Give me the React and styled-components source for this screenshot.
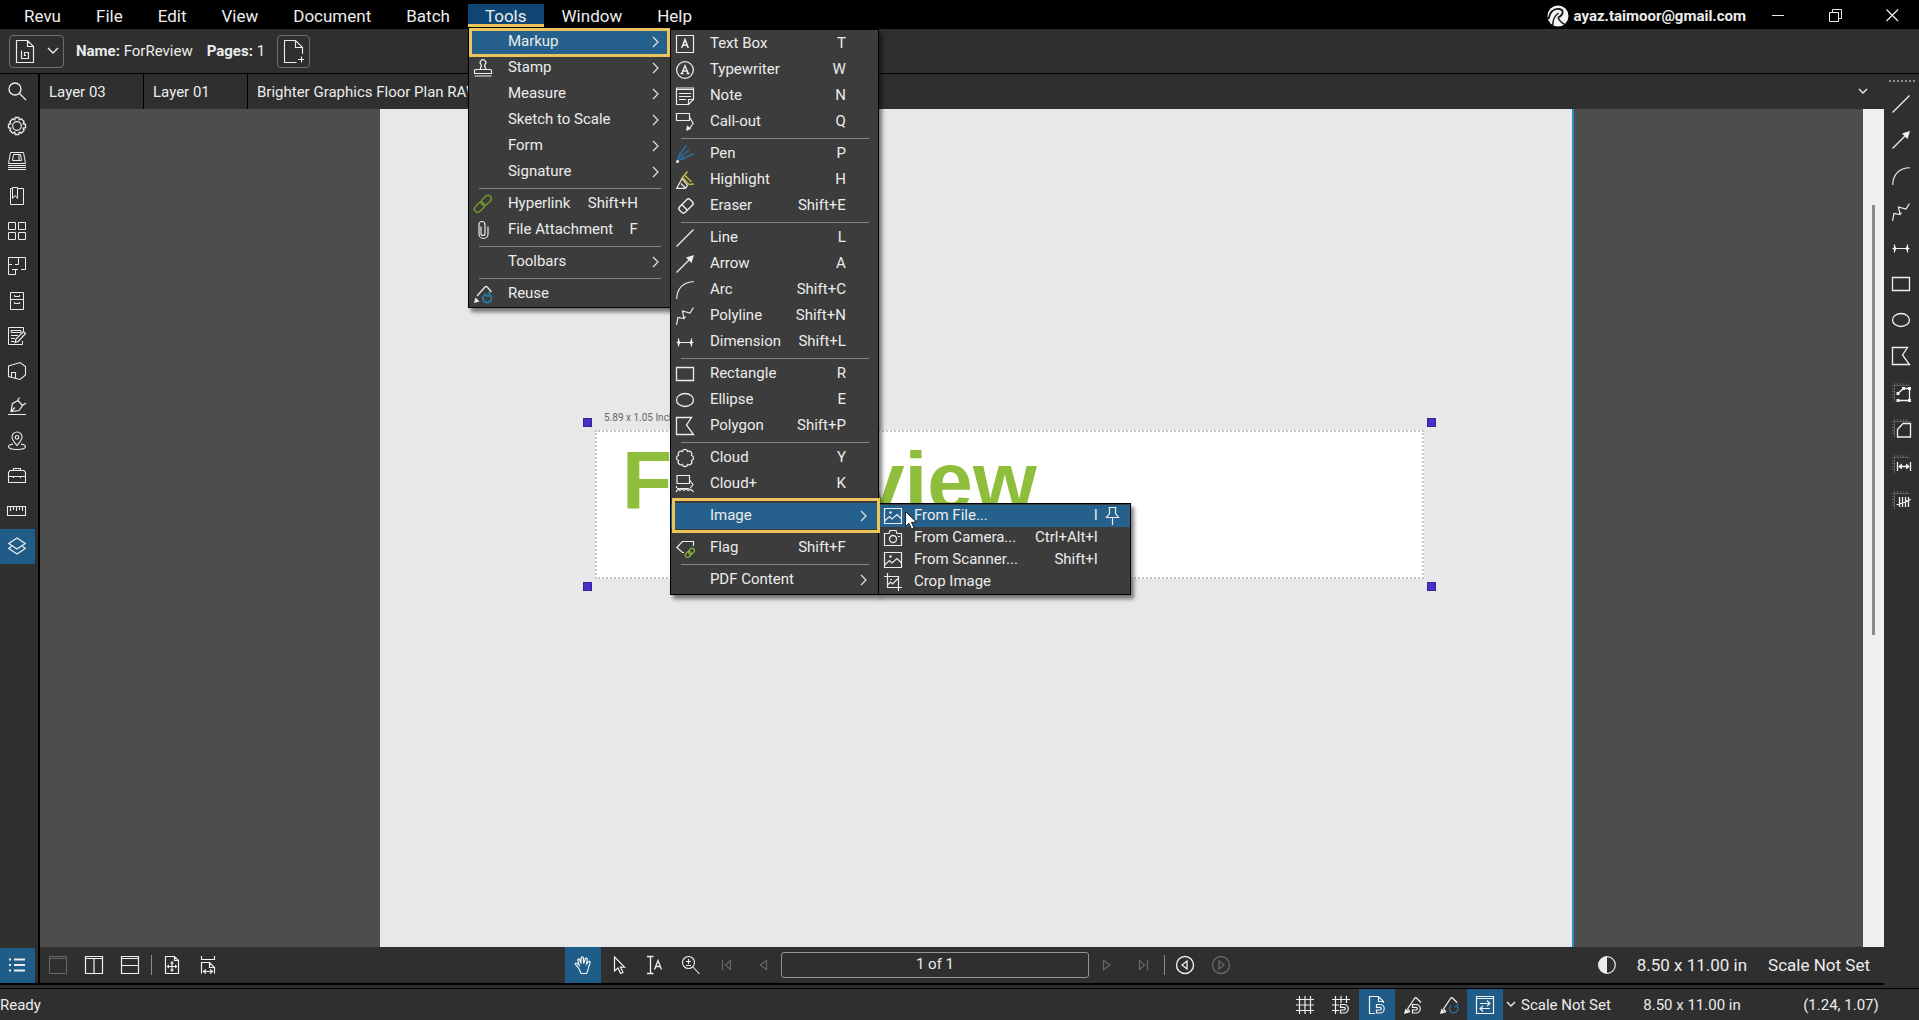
import React from "react";
import styled, { createGlobalStyle, css } from "styled-components";

const color = {
  bar: "#2f2f2f",
  menu: "#3c3c3c",
  canvas: "#4d4d4d",
  page: "#e8e8e8",
  accent: "#1f5c87",
  titleAccent: "#0f4674",
  gold: "#ecc45c",
  text: "#ececec",
  green: "#8fbe3c",
};

const Global = createGlobalStyle`
  *, *::before, *::after { box-sizing: border-box; }
  body { margin: 0; background: ${color.bar}; }
  body, button, input {
    font-family: Roboto, "Liberation Sans", sans-serif;
    font-size: 15px;
    color: ${color.text};
  }
  button { border: 0; padding: 0; background: none; text-align: left; }
  ul { list-style: none; margin: 0; padding: 0; }
  svg { display: block; flex: none; overflow: visible; }
`;

const Shell = styled.div`
  display: flex;
  flex-direction: column;
  height: 100vh;
  overflow: hidden;
`;

/* ---------- title bar ---------- */

const TitleBar = styled.header`
  display: flex;
  flex: none;
  height: 29px;
  background: #000;
`;

const MenuBar = styled.ul`
  display: flex;
  gap: 1px;
  padding: 4px 0 0 7px;
`;

const MenuBarItem = styled.li`
  position: relative;
`;

const MenuBarButton = styled.button`
  height: 25px;
  padding: 0 17px 2px;
  font-size: 17px;
  ${(p) =>
    p.$open &&
    css`
      background: linear-gradient(
        ${color.titleAccent} 20px,
        ${color.gold} 20px 23px,
        #000 23px
      );
    `}
`;

const Account = styled.div`
  display: flex;
  align-items: center;
  gap: 5px;
  margin-left: auto;
  padding: 2px 6px 0 0;
  font-weight: 700;
`;

const WindowControls = styled.div`
  display: flex;
  gap: 4px;
`;

const WindowButton = styled.button`
  display: grid;
  place-items: center;
  width: 53px;
  height: 31px;
`;

/* ---------- drop-down menus ---------- */

const Menu = styled.ul`
  position: absolute;
  z-index: 10;
  top: ${(p) => (p.$root ? "24px" : "0")};
  left: ${(p) => (p.$root ? "0" : "100%")};
  width: ${(p) => p.$width}px;
  padding: ${(p) => (p.$root ? "0" : "1px 0")};
  border: 1px solid #000;
  background: ${color.menu};
  box-shadow: 3px 4px 4px rgba(0, 0, 0, 0.5);
`;

const MenuItem = styled.li`
  position: relative;
`;

const MenuRow = styled.button`
  display: flex;
  align-items: center;
  width: 100%;
  height: ${(p) => (p.$compact ? 22 : 26)}px;
  padding: 0 ${(p) => (p.$compact ? 9 : 11)}px 0 5px;
  background: ${(p) => (p.$active ? "#25618c" : "none")};
`;

const IconSlot = styled.span`
  flex: none;
  width: 18px;
  height: 18px;
  margin-right: ${(p) => (p.$compact ? 12 : 16)}px;
`;

const RowLabel = styled.span`
  flex: 1;
  padding-bottom: 2px;
  white-space: nowrap;
`;

const Shortcut = styled.kbd`
  padding-bottom: 2px;
  font: inherit;
`;

const Trail = styled.span`
  display: flex;
  justify-content: flex-end;
  width: ${(p) => (p.$compact ? 23 : 21)}px;
`;

const Separator = styled.li`
  height: 6px;
  padding: 3px 9px 0 10px;
  &::before {
    content: "";
    display: block;
    height: 1px;
    background: #858585;
  }
`;

const Ring = styled.span`
  position: absolute;
  z-index: 20;
  inset: ${(p) => p.$inset};
  border: 3px solid ${color.gold};
  pointer-events: none;
`;

/* ---------- file bar ---------- */

const FileBar = styled.section`
  display: flex;
  flex: none;
  align-items: center;
  height: 45px;
  padding: 0 9px;
  border-bottom: 1px solid #000;
`;

const OutlineButton = styled.button`
  display: flex;
  align-items: center;
  justify-content: center;
  gap: ${(p) => p.$gap || 0}px;
  width: ${(p) => p.$width}px;
  height: 33px;
  border: 1px solid #6e6e6e;
  border-radius: 4px;
`;

const FileFacts = styled.p`
  display: flex;
  gap: 14px;
  margin: 0 12px;
`;

/* ---------- work area ---------- */

const Work = styled.div`
  display: flex;
  flex: 1;
  min-height: 0;
`;

const Main = styled.div`
  display: flex;
  flex: 1;
  min-width: 0;
  margin-bottom: 3px;
  border-bottom: 2px solid #000;
`;

const LeftBar = styled.nav`
  display: flex;
  flex: none;
  flex-direction: column;
  width: 40px;
  border-right: 2px solid #000;
`;

const PanelButton = styled.button`
  width: 35px;
  height: 35px;
  padding: 8px 9px 9px 8px;
  background: ${(p) => (p.$active ? color.accent : "none")};
  margin-top: ${(p) => (p.$last ? "auto" : 0)};
`;

const Center = styled.div`
  display: flex;
  flex: 1;
  flex-direction: column;
  min-width: 0;
`;

const TabStrip = styled.div`
  display: flex;
  flex: none;
  height: 35px;
`;

const Tab = styled.button`
  min-width: 104px;
  padding: 0 9px;
  border-right: 1px solid #000;
  white-space: nowrap;
`;

const TabMenuButton = styled.button`
  display: grid;
  place-items: center;
  width: 42px;
  margin-left: auto;
`;

const Viewport = styled.main`
  display: grid;
  flex: 1;
  grid-template-columns: 340px 1fr 289px 21px;
  min-height: 0;
  background: ${color.canvas};
`;

const Page = styled.div`
  grid-column: 2;
  padding: 321px 148px 0 215px;
  border-right: 2px solid #2b8fc4;
  background: ${color.page};
`;

const Markup = styled.div`
  position: relative;
  height: 149px;
  padding: 3px 25px;
  border: 2px dotted #c3c3d2;
  background: #fff;
`;

const MarkupText = styled.div`
  color: ${color.green};
  font: 700 82px/92px "Liberation Sans", Arial, sans-serif;
`;

const MarkupSize = styled.span`
  position: absolute;
  top: -20px;
  left: 7px;
  color: #666;
  font-size: 10px;
`;

const Handle = styled.i`
  position: absolute;
  ${(p) => p.$v}: -14px;
  ${(p) => p.$h}: -14px;
  width: 9px;
  height: 9px;
  border: 1px solid #33249a;
  background: #4a2fcb;
`;

const ScrollTrack = styled.div`
  grid-column: 4;
  display: flex;
  justify-content: center;
  padding-top: 96px;
  background: #f0f0f0;
`;

const ScrollThumb = styled.div`
  width: 3px;
  height: 430px;
  background: #8a8a8a;
`;

const RightBar = styled.nav`
  display: flex;
  flex: none;
  flex-direction: column;
  align-items: center;
  width: 35px;
  padding-top: 2px;
`;

const Grip = styled.div`
  flex: none;
  width: 26px;
  height: 6px;
  border-bottom: 2px dotted #8c8c8c;
`;

const RightTools = styled.div`
  padding: 4px 2px 0 0;
`;

const ToolButton = styled.button`
  display: grid;
  flex: none;
  place-items: center;
  width: 36px;
  height: 36px;
  background: ${(p) => (p.$active ? color.accent : "none")};
  color: ${(p) => (p.disabled ? "#686868" : "#f0f0f0")};
`;

/* ---------- page navigation ---------- */

const NavBar = styled.footer`
  display: flex;
  flex: none;
  align-items: center;
  height: 36px;
  padding-right: 14px;
  font-size: 17px;
`;

const NavGroup = styled.div`
  display: flex;
  flex: ${(p) => p.$flex || "none"};
  align-items: center;
`;

const NavRule = styled.i`
  width: 1px;
  height: 20px;
  margin: 0 2px 0 3px;
  background: #8a8a8a;
`;

const PageField = styled.input`
  width: 308px;
  height: 26px;
  padding: 0 0 2px;
  border: 1px solid #949494;
  border-radius: 3px;
  background: transparent;
  text-align: center;
`;

const NavFacts = styled.div`
  display: flex;
  align-items: center;
  gap: 21px;
  margin-left: auto;
  white-space: nowrap;
`;

/* ---------- status bar ---------- */

const StatusBar = styled.footer`
  display: flex;
  flex: none;
  align-items: center;
  height: 32px;
  border-top: 1px solid #000;
`;

const StatusMessage = styled.span`
  flex: 1;
`;

const StatusToggle = styled(ToolButton)`
  height: 31px;
`;

const ScaleButton = styled.button`
  display: flex;
  align-items: center;
  gap: 6px;
  width: 118px;
  padding-left: 4px;
  white-space: nowrap;
`;

const StatusFact = styled.span`
  width: ${(p) => p.$width}px;
  text-align: center;
`;

/* ---------- drawings ---------- */

const dot = { fill: "currentColor", stroke: "none" };
const rulerTicks = (
  <g stroke="#5c5c63">
    <path d="M0 2.5H18M2.5 0V18M5.5 0V2M8.5 0V2M11.5 0V2M14.5 0V2M0 5.5H2M0 8.5H2M0 11.5H2M0 14.5H2" />
  </g>
);
const magnet = (
  <path
    d="M8.5 8.5H12a4 4 0 0 1 0 8.5H8.5V14H12a1.2 1.2 0 0 0 0-2.600H8.500Z"
    strokeWidth="1.2"
  />
);
const pencilArm = <path d="M3.500 13L10.500 2.500Q11.500 1 12.700 2.200L17 6.500M3.500 13L6 16" strokeWidth="1.3" />;
const penTip = <path d="M0 18L1.500 12.500L5.500 16.500Z" {...dot} />;

const drawings = {
  search: <path d="M13 7A6 6 0 1 1 1 7A6 6 0 1 1 13 7ZM11.500 11.500L18 18" strokeWidth="1.3" />,
  gear: (
    <>
      <path d="M7.300 .5H10.700L11.300 2.800L13.300 1.900L16.100 4.700L15.200 6.700L17.500 7.300V10.700L15.200 11.300L16.100 13.300L13.300 16.100L11.300 15.200L10.700 17.500H7.300L6.700 15.200L4.700 16.100L1.900 13.300L2.800 11.300L.5 10.700V7.300L2.800 6.700L1.900 4.700L4.700 1.900L6.700 2.800Z" strokeWidth="1.3" />
      <circle cx="9" cy="9" r="4.300" strokeWidth="1.2" />
    </>
  ),
  sets: <path d="M2.500 .5H15.500L17.500 11.500H.5ZM5.500 2.500H12.500L13.500 8.500H4.500ZM11 2.500V8.500M0 13.500H18M0 15.500H18M0 17.500H18" />,
  bookmark: <path d="M4.500 1.500H2.500V17.500H15.500V1.500H9.500M4.500 .5H9.500V11.500L7 8.500L4.500 11.500Z" />,
  thumbs: <path d="M.5 .5H7.500V7.500H.5ZM10.500 .5H17.500V7.500H10.500ZM.5 10.500H7.500V17.500H.5ZM10.500 10.500H17.500V17.500H10.500Z" />,
  plan: <path d="M4 7.500H.5V.5H17.500V12.500H13M.5 7.500V17.500H7.500V12.500M4 12.500H10M10.500 .5V7.500H7" />,
  cabinet: <path d="M2.500 .5H15.500V17.500H2.500ZM2.500 7.500H15.500M6.500 3V4.500H11.500V3M6.500 10V11.500H11.500V10" />,
  forms: (
    <>
      <path d="M15.500 5V.5H.5V17.500H14.500V14M3 3.500H13V5.500H3ZM3 8.500H10M3 11.500H7M3 14.500H6" />
      <path d="M7 15.500L8 12L15.500 4.500L17.500 6.500L10.500 14.200Z" strokeWidth="1.2" />
    </>
  ),
  shape3d: <path d="M.5 4L12 .5L17.500 4.500V13L12 17.500L.5 14.500ZM3.500 15V10.500H7.500V16" strokeWidth="1.1" />,
  sign: <path d="M0 17.500H18M3 14.500L4.500 6.500L10 3.500L14.500 8.500L11 13.500ZM3 14.500L7 10.500M9.500 3.500L11.500 .5M14.500 8.500L18 6M10 3.500L14.500 8.500" strokeWidth="1.2" />,
  place: (
    <>
      <path d="M9 13.500C6.500 10.500 4 8 4 5A5 5 0 0 1 14 5C14 8 11.500 10.500 9 13.500ZM5 12.100C2 12.600.5 13.500.5 14.500C.5 16.200 4 17.500 9 17.500S17.500 16.200 17.500 14.500C17.500 13.500 16 12.600 13 12.100" strokeWidth="1.1" />
      <circle cx="9" cy="5.300" r="1.800" strokeWidth="1.2" />
    </>
  ),
  toolbox: <path d="M.5 15.500V5.500L2 3.500H16L17.500 5.500V15.500ZM5.500 3.500V1.500H12.500V3.500M.5 9.500H17.500M5.500 9V11M12.500 9V11" strokeWidth="1.1" />,
  ruler: <path d="M-.5 4.500H17.500V13.500H-.5ZM2.500 5V9M5.500 5V8M8.500 5V9M11.500 5V8M14.500 5V9" strokeWidth="1.1" />,
  layers: <path d="M9 1L17.200 6.500L9 12L.8 6.500ZM3.500 9.200L.8 11.500L9 17L17.200 11.500L14.500 9.200" strokeWidth="1.3" />,
  list: <path d="M6 3.500H17M6 9H17M6 14.500H17M1 3.500H3M1 9H3M1 14.500H3" strokeWidth="2" />,

  bluebeamFile: <path d="M.5 .5H11.500L17.500 6.500V22.500H.5ZM11.500 .5V6.500H17.500M5.500 10.500V18.500H12.500V12.500H8.500V15.500H10" strokeWidth="1.200" />,
  addPage: <path d="M13.500 22.500H1.500V.5H12.500L19.500 7.500V14M12.500 .5V7.500H19.500M15 19.500H21M18.500 16.500V22.500" strokeWidth="1.100" />,
  caret: <path d="M0 0L5 5L10 0" strokeWidth="1.4" />,
  smallCaret: <path d="M0 0L4 4L8 0" strokeWidth="1.4" />,
  arrowRight: <path d="M0 0L5 5L0 10" strokeWidth="1.100" />,

  stamp: <path d="M6.500 10.500V8.500Q8 7.500 7 5.500A2.800 2.800 0 1 1 11 5.500Q10 7.500 11.500 8.500V10.500M.5 14.500V11.500Q.5 10.500 1.500 10.500H16.500Q17.500 10.500 17.500 11.500V14.500ZM.5 17H17.500" strokeWidth="1.200" />,
  link: (
    <g stroke="#6f9b2c" strokeWidth="1.400" transform="rotate(-45 9 9)">
      <rect x="-1.500" y="5.500" width="11.500" height="6.500" rx="3.200" />
      <rect x="8" y="5.500" width="11.500" height="6.500" rx="3.200" />
    </g>
  ),
  clip: <path d="M7 5.500V12.500A2 2 0 0 0 11 12.500V3.500A3 3 0 0 0 5 3.500V13A4.500 4.500 0 0 0 14 13V5.500" strokeWidth="1.200" />,
  reuse: (
    <>
      <path d="M3 11L11 2Q12 .7 13.200 2L17.500 7" strokeWidth="1.300" />
      {penTip}
      <path d="M12.500 9A4.300 4.300 0 1 0 16 10M15 6.500L16 10.500L12 11" stroke="#2a78ad" strokeWidth="1.800" />
    </>
  ),
  textbox: (
    <>
      <path d="M.5 .5H17.500V17.500H.5Z" strokeWidth="1.200" />
      <path d="M5.700 13L9 4.700L12.300 13M7 10.300H11" strokeWidth="1.600" />
    </>
  ),
  typewriter: (
    <>
      <circle cx="9" cy="9" r="8.300" strokeWidth="1.300" />
      <path d="M5.700 12.500L9 4.700L12.300 12.500M7 10H11M4.500 12.500H7.500M10.500 12.500H13.500" strokeWidth="1.400" />
    </>
  ),
  note: <path d="M.5 1H17.500V12.500L12.500 17.500H.5ZM17.500 12.500H12.500V17.500M.5 2.500H17.500M3 6.500H15M3 9.500H15M3 12.500H10" strokeWidth="1.200" />,
  callout: (
    <>
      <path d="M.5 .5H13.500V7.500H.5ZM13.500 4L17.200 10.500L13 16" strokeWidth="1.200" />
      <path d="M10 18L11 12.500L15.300 15.800Z" {...dot} />
    </>
  ),
  pen: (
    <>
      <path d="M1.500 16L3.500 8.500L8.500 13.500Z" fill="#245c80" stroke="#2e78a6" />
      <path d="M4 9L10.500 0M8.500 13L17.500 8.500M6.500 10.500L13 5" stroke="#2c6c94" strokeWidth="1.600" />
      <circle cx="1.500" cy="16.500" r="1.500" {...dot} />
    </>
  ),
  highlight: (
    <>
      <path d="M11.500 .5L6.500 6.500L13 13.500L18 13M8.500 4L15.500 11" stroke="#bdb43c" strokeWidth="1.600" />
      <path d="M.8 17.300L6 7.500L11.500 14.500L9.500 17.300ZM5 12.500L9.500 17" strokeWidth="1.200" />
    </>
  ),
  eraser: (
    <g transform="rotate(-45 10 9)" strokeWidth="1.400">
      <rect x="2.500" y="5" width="15" height="8" rx="2.500" />
      <path d="M8 5V13" />
    </g>
  ),
  line: <path d="M.5 17.500L17.500 .5" strokeWidth="1.300" />,
  arrow: (
    <>
      <path d="M.5 17.500L13 5" strokeWidth="1.300" />
      <path d="M18 0L15.500 8L10 2.500Z" {...dot} />
    </>
  ),
  arc: <path d="M.7 18C.7 8 7 .7 18 .7" strokeWidth="1.100" />,
  polyline: <path d="M.5 18L2 10.500L8 11.500L6.500 4L14 6L17.500 .5M9.500 9.500L8 11.500" strokeWidth="1.200" />,
  dimension: (
    <>
      <path d="M1 9.500H17M2.500 5.500V13.500M15.500 5.500V13.500" strokeWidth="1.200" />
      <path d="M0 9.500L4 7.500V11.500ZM18 9.500L14 7.500V11.500Z" {...dot} />
    </>
  ),
  rectangle: <path d="M.5 2.500H17.500V15.500H.5Z" strokeWidth="1.300" />,
  ellipse: <ellipse cx="9" cy="9" rx="8.500" ry="6.500" strokeWidth="1.300" />,
  polygon: <path d="M.5 .5H15.500L10.500 8L17.500 17.500H.5Z" strokeWidth="1.300" />,
  cloud: <path d="M6.300 2.500A2.800 2.800 0 0 1 11.700 2.500A2.800 2.800 0 0 1 15.500 6.300A2.800 2.800 0 0 1 15.500 11.700A2.800 2.800 0 0 1 11.700 15.500A2.800 2.800 0 0 1 6.300 15.500A2.800 2.800 0 0 1 2.500 11.700A2.800 2.800 0 0 1 2.500 6.300A2.800 2.800 0 0 1 6.300 2.500Z" strokeWidth="1.200" />,
  cloudPlus: <path d="M1 .5H13.500V8.500H1ZM13.500 5L17 9.500L14 13.500M.5 11V13M0 17Q2 13 4 15.500Q6 13 8 15.500Q10 13 12 15.500Q15 13 17.500 17M1 13.500H13" strokeWidth="1.200" />,
  flag: (
    <>
      <path d="M8 13.500H6.500L.8 8.500L6.500 2.500H17.500V7" strokeWidth="1.200" />
      <g stroke="#8bb83c" strokeWidth="1.200" transform="rotate(-45 14 14)">
        <rect x="8.500" y="11.500" width="6.500" height="4.500" rx="2.200" />
        <rect x="13" y="11.500" width="6.500" height="4.500" rx="2.200" />
      </g>
    </>
  ),
  picture: (
    <>
      <path d="M.5 1.500H17.500V16.500H.5ZM.5 14L5.500 9.500L8 12L13 7.500L17.500 12" strokeWidth="1.200" />
      <circle cx="6.500" cy="5.500" r="1.300" {...dot} />
    </>
  ),
  camera: (
    <>
      <path d="M.5 4.500H5L6 1.500H12L13 4.500H17.500V16.500H.5Z" strokeWidth="1.200" />
      <circle cx="9" cy="10" r="3.500" strokeWidth="1.300" />
      <path d="M14 7.500H16" />
    </>
  ),
  crop: <path d="M3.500 0V14.500H14.500M0 3.500H14.500V18M3.500 12L6.500 9L8.500 11L14 5.500M6 6.500H8M14.500 14.500H18" strokeWidth="1.200" />,
  pin: <path d="M5.500 .5H13.500M6.500 .5V6.500L3.500 10.500H15.500L12.500 6.500V.5M9.500 10.500V18" strokeWidth="1.200" />,

  measurePoly: (
    <>
      {rulerTicks}
      <path d="M6 10.500L11.500 5.500H17.500V17.500H6" strokeWidth="1.300" />
      <path d="M4.500 9H7.500V12H4.500ZM10 4H13V7H10ZM16 4H19V7H16ZM16 16H19V19H16ZM4.500 16H7.500V19H4.500Z" {...dot} />
    </>
  ),
  measureArea: (
    <>
      {rulerTicks}
      <path d="M5.500 18V10.500L11 4.500H18.500V18Z" strokeWidth="1.300" />
    </>
  ),
  measureLength: (
    <>
      {rulerTicks}
      <path d="M5.500 7V16M18.500 7V16M7 11.500H17" strokeWidth="1.300" />
      <path d="M6 11.500L10 8.500V14.500ZM18 11.500L14 8.500V14.500Z" {...dot} />
    </>
  ),
  count: (
    <>
      {rulerTicks}
      <path d="M7.500 6V16M10.500 6V16M13.500 6V16M16.500 6V16M4.500 13.500L19 8.500" strokeWidth="1.300" />
    </>
  ),

  unsplit: <path d="M.5 .5H17.500V17.500H.5ZM.5 2.500H17.500" />,
  splitV: <path d="M.5 .5H17.500V17.500H.5ZM.5 2.500H17.500M9 2.500V17.500" strokeWidth="1.200" />,
  splitH: <path d="M.5 .5H17.500V17.500H.5ZM.5 2.500H17.500M.5 9.500H17.500" strokeWidth="1.200" />,
  fitPage: (
    <>
      <path d="M2.500 .5H11.500L15.500 4.500V17.500H2.500ZM11.500 .5V4.500H15.500M5 10.500H13M9 6.500V14.500" strokeWidth="1.200" />
      <path d="M3.500 10.500L6 8.500V12.500ZM14.500 10.500L12 8.500V12.500ZM9 5L7 7.500H11ZM9 16L7 13.500H11Z" {...dot} />
    </>
  ),
  fitWidth: <path d="M2.500 0V3.500H15.500V0M2.500 17.500V6.500H10.500L15.500 11.500V17.500M10.500 6.500V11.500H15.500M5 15.500H13M7 13.500L4.500 15.500L7 17.500M11 13.500L13.500 15.500L11 17.500" strokeWidth="1.200" />,
  hand: <path d="M4.500 12L1.500 8.500Q.8 7.200 2 7Q3 6.900 5 9L3.800 3.700Q4.300 2.200 5.600 3.200L7 7.500L7.200 1.700Q8.200 .2 9.300 1.700L9.700 7.500L11.300 2.500Q12.500 1.400 13.300 2.900L12.500 8L14.500 5.500Q16 4.900 16.200 6.200L14.500 11.500Q14 15 12.500 17.500H7Q6 14.500 4.500 12Z" strokeWidth="1.200" />,
  select: <path d="M4.500 1V15L8 12L10.500 17.500L13 16.500L10.500 11.200H14.500Z" strokeWidth="1.200" />,
  selectText: <path d="M1 .5H7.500M4.500 .5V17.500M1 17.500H7.500M8.500 13.500L12 4.500L15.500 13.500M9.700 10.500H14.300" strokeWidth="1.300" />,
  zoomTool: <path d="M12.500 6.500A6 6 0 1 1 .5 6.500A6 6 0 1 1 12.500 6.500ZM11 11L17.500 18M4 5.500H9M6.500 3V8M4 9.500H9" strokeWidth="1.100" />,
  first: <path d="M4.500 4V14M12.500 4.500V13.500L7.500 9Z" strokeWidth="1.200" />,
  prev: <path d="M12.500 4.500V13.500L6.500 9Z" strokeWidth="1.200" />,
  next: <path d="M5.500 4.500V13.500L12 9Z" strokeWidth="1.200" />,
  last: <path d="M13.500 4V14M5.500 4.500V13.500L10.500 9Z" strokeWidth="1.200" />,
  viewBack: (
    <>
      <circle cx="9" cy="9" r="8.500" strokeWidth="1.400" />
      <path d="M11 5V13L6 9Z" strokeWidth="1.300" />
    </>
  ),
  viewForward: (
    <>
      <circle cx="9" cy="9" r="8.500" strokeWidth="1.400" />
      <path d="M7 5V13L12 9Z" strokeWidth="1.300" />
    </>
  ),
  contrast: (
    <>
      <circle cx="9" cy="9" r="8.300" strokeWidth="1.200" />
      <path d="M9 .5A8.500 8.500 0 0 0 9 17.500Z" {...dot} />
    </>
  ),

  grid: <path d="M3.500 0V18M9 0V18M14.500 0V18M0 3.500H18M0 9H18M0 14.500H18" strokeWidth="1.200" />,
  snapGrid: (
    <>
      <path d="M3.500 0V18M9 0V7M14.500 0V7M0 3.500H18M0 9H7M0 14.500H7" strokeWidth="1.200" />
      {magnet}
    </>
  ),
  snapPage: (
    <>
      <path d="M7 17.500H1.500V.5H10.500L15.500 5.500V7M10.500 .5V5.500H15.500" strokeWidth="1.200" />
      {magnet}
    </>
  ),
  snapMarkup: (
    <>
      {pencilArm}
      {penTip}
      {magnet}
    </>
  ),
  reuseStatus: (
    <>
      {pencilArm}
      {penTip}
      <path d="M11 9.500A4.200 4.200 0 1 0 17 10M17.500 7V10.500H14" stroke="#2d6a8f" strokeWidth="1.500" />
    </>
  ),
  sync: <path d="M.5 .5H17.500V17.500H.5ZM.5 2.500H17.500M4 7.500H14M11 4.500L14 7.500L11 10M14 12.500H4M7 10L4 12.500L7 15.500" strokeWidth="1.200" />,

  minimize: <path d="M0 6.500H12" />,
  restore: <path d="M.5 3.500H9.500V12.500H.5ZM3.500 3V.5H12.500V9.500H10" />,
  close: <path d="M.5 .5L12 12M12 .5L.5 12" strokeWidth="1.300" />,
};

function Icon({ name, w = 18, h = 18 }) {
  return (
    <svg width={w} height={h} viewBox={`0 0 ${w} ${h}`} fill="none" stroke="currentColor" aria-hidden="true">
      {drawings[name]}
    </svg>
  );
}

function Logo() {
  return (
    <svg width="22" height="22" viewBox="0 0 22 22" aria-hidden="true">
      <circle cx="11" cy="11" r="10.500" fill="#f4f4f4" />
      <path d="M1.500 14C3 7 7 3.500 12 4S17 9.500 11 12.500" fill="none" stroke="#161616" strokeWidth="1.800" />
      <path d="M11 12.500C12.500 16 14 18 17.500 19M6 20.500C5.500 15.500 7.500 11 11.500 8" fill="none" stroke="#161616" strokeWidth="1.500" />
    </svg>
  );
}

const Cursor = styled.svg`
  position: absolute;
  z-index: 30;
  top: 6px;
  left: 26px;
`;

/* ---------- data ---------- */

const imageMenu = [
  { label: "From File...", icon: "picture", keys: "I", active: true, pinned: true },
  { label: "From Camera...", icon: "camera", keys: "Ctrl+Alt+I" },
  { label: "From Scanner...", icon: "picture", keys: "Shift+I" },
  { label: "Crop Image", icon: "crop" },
];

const markupMenu = [
  { label: "Text Box", icon: "textbox", keys: "T" },
  { label: "Typewriter", icon: "typewriter", keys: "W" },
  { label: "Note", icon: "note", keys: "N" },
  { label: "Call-out", icon: "callout", keys: "Q" },
  null,
  { label: "Pen", icon: "pen", keys: "P" },
  { label: "Highlight", icon: "highlight", keys: "H" },
  { label: "Eraser", icon: "eraser", keys: "Shift+E" },
  null,
  { label: "Line", icon: "line", keys: "L" },
  { label: "Arrow", icon: "arrow", keys: "A" },
  { label: "Arc", icon: "arc", keys: "Shift+C" },
  { label: "Polyline", icon: "polyline", keys: "Shift+N" },
  { label: "Dimension", icon: "dimension", keys: "Shift+L" },
  null,
  { label: "Rectangle", icon: "rectangle", keys: "R" },
  { label: "Ellipse", icon: "ellipse", keys: "E" },
  { label: "Polygon", icon: "polygon", keys: "Shift+P" },
  null,
  { label: "Cloud", icon: "cloud", keys: "Y" },
  { label: "Cloud+", icon: "cloudPlus", keys: "K" },
  null,
  {
    label: "Image",
    active: true,
    ring: "-5px -2px -4px 1px",
    more: { items: imageMenu, width: 253, compact: true },
  },
  null,
  { label: "Flag", icon: "flag", keys: "Shift+F" },
  null,
  { label: "PDF Content", more: {} },
];

const toolsMenu = [
  { label: "Markup", active: true, ring: "-1px 0 -2px 0", more: { items: markupMenu, width: 209 } },
  { label: "Stamp", icon: "stamp", more: {} },
  { label: "Measure", more: {} },
  { label: "Sketch to Scale", more: {} },
  { label: "Form", more: {} },
  { label: "Signature", more: {} },
  null,
  { label: "Hyperlink", icon: "link", keys: "Shift+H" },
  { label: "File Attachment", icon: "clip", keys: "F" },
  null,
  { label: "Toolbars", more: {} },
  null,
  { label: "Reuse", icon: "reuse" },
];

const panels = ["search", "gear", "sets", "bookmark", "thumbs", "plan", "cabinet", "forms", "shape3d", "sign", "place", "toolbox", "ruler", "layers"];
const tools = ["line", "arrow", "arc", "polyline", "dimension", "rectangle", "ellipse", "polygon", "measurePoly", "measureArea", "measureLength", "count"];
const toggles = ["grid", "snapGrid", "snapPage", "snapMarkup", "reuseStatus", "sync"];

function MenuList({ items, width, root, compact }) {
  return (
    <Menu $width={width} $root={root}>
      {items.map((item, i) =>
        item ? (
          <MenuItem key={item.label}>
            <MenuRow type="button" $active={item.active} $compact={compact}>
              <IconSlot $compact={compact}>{item.icon && <Icon name={item.icon} />}</IconSlot>
              <RowLabel>{item.label}</RowLabel>
              {item.keys && <Shortcut>{item.keys}</Shortcut>}
              <Trail $compact={compact}>
                {item.more && <Icon name="arrowRight" w={6} h={10} />}
                {item.pinned && <Icon name="pin" />}
              </Trail>
            </MenuRow>
            {item.more?.items && <MenuList {...item.more} />}
            {item.ring && <Ring $inset={item.ring} />}
            {item.pinned && (
              <Cursor width="12" height="19" viewBox="0 0 12 19" aria-hidden="true">
                <path d="M.5 .5V15.500L4 12.200L6.500 18L9 17L6.500 11.300H11.500Z" fill="#fff" stroke="#222" />
              </Cursor>
            )}
          </MenuItem>
        ) : (
          <Separator key={i} role="separator" />
        )
      )}
    </Menu>
  );
}

function Tool({ name, as: Button = ToolButton, ...rest }) {
  return (
    <Button type="button" aria-label={name} {...rest}>
      <Icon name={name} />
    </Button>
  );
}

export default function App() {
  return (
    <Shell>
      <Global />
      <TitleBar>
        <MenuBar>
          {["Revu", "File", "Edit", "View", "Document", "Batch", "Tools", "Window", "Help"].map((name) => (
            <MenuBarItem key={name}>
              <MenuBarButton type="button" $open={name === "Tools"}>{name}</MenuBarButton>
              {name === "Tools" && <MenuList items={toolsMenu} width={203} root />}
            </MenuBarItem>
          ))}
        </MenuBar>
        <Account>
          <Logo />
          ayaz.taimoor@gmail.com
        </Account>
        <WindowControls>
          {["minimize", "restore", "close"].map((name) => (
            <WindowButton key={name} type="button" aria-label={name}>
              <Icon name={name} w={13} h={13} />
            </WindowButton>
          ))}
        </WindowControls>
      </TitleBar>

      <FileBar>
        <OutlineButton type="button" $width={55} $gap={12} aria-label="File">
          <Icon name="bluebeamFile" w={20} h={23} />
          <Icon name="caret" w={10} h={6} />
        </OutlineButton>
        <FileFacts>
          <span><b>Name:</b> ForReview</span>
          <span><b>Pages:</b> 1</span>
        </FileFacts>
        <OutlineButton type="button" $width={33} aria-label="Add page">
          <Icon name="addPage" w={21} h={23} />
        </OutlineButton>
      </FileBar>

      <Work>
        <Main>
          <LeftBar>
            {panels.map((name) => (
              <PanelButton key={name} type="button" aria-label={name} $active={name === "layers"}>
                <Icon name={name} />
              </PanelButton>
            ))}
            <PanelButton type="button" aria-label="Markups list" $active $last>
              <Icon name="list" />
            </PanelButton>
          </LeftBar>
          <Center>
            <TabStrip>
              <Tab type="button">Layer 03</Tab>
              <Tab type="button">Layer 01</Tab>
              <Tab type="button">Brighter Graphics Floor Plan RAW</Tab>
              <TabMenuButton type="button" aria-label="All tabs">
                <Icon name="smallCaret" w={8} h={5} />
              </TabMenuButton>
            </TabStrip>
            <Viewport>
              <Page>
                <Markup>
                  <MarkupSize>5.89 x 1.05 Inches</MarkupSize>
                  <Handle $v="top" $h="left" />
                  <Handle $v="top" $h="right" />
                  <Handle $v="bottom" $h="left" />
                  <Handle $v="bottom" $h="right" />
                  <MarkupText>ForReview</MarkupText>
                </Markup>
              </Page>
              <ScrollTrack>
                <ScrollThumb />
              </ScrollTrack>
            </Viewport>
            <NavBar>
              <NavGroup $flex="0 1 525px">
                <Tool name="unsplit" disabled />
                <Tool name="splitV" />
                <Tool name="splitH" />
                <NavRule />
                <Tool name="fitPage" />
                <Tool name="fitWidth" />
              </NavGroup>
              <NavGroup>
                <Tool name="hand" $active />
                <Tool name="select" />
                <Tool name="selectText" />
                <Tool name="zoomTool" />
                <Tool name="first" disabled />
                <Tool name="prev" disabled />
                <PageField aria-label="Page" defaultValue="1 of 1" />
                <Tool name="next" disabled />
                <Tool name="last" disabled />
                <NavRule />
                <Tool name="viewBack" />
                <Tool name="viewForward" disabled />
              </NavGroup>
              <NavFacts>
                <Icon name="contrast" />
                <span>8.50 x 11.00 in</span>
                <span>Scale Not Set</span>
              </NavFacts>
            </NavBar>
          </Center>
        </Main>
        <RightBar>
          <Grip />
          <RightTools>
            {tools.map((name) => (
              <Tool key={name} name={name} />
            ))}
          </RightTools>
        </RightBar>
      </Work>

      <StatusBar>
        <StatusMessage>Ready</StatusMessage>
        {toggles.map((name) => (
          <Tool key={name} name={name} as={StatusToggle} $active={name === "snapPage" || name === "sync"} />
        ))}
        <ScaleButton type="button">
          <Icon name="smallCaret" w={8} h={5} />
          Scale Not Set
        </ScaleButton>
        <StatusFact $width={142}>8.50 x 11.00 in</StatusFact>
        <StatusFact $width={156}>(1.24, 1.07)</StatusFact>
      </StatusBar>
    </Shell>
  );
}
